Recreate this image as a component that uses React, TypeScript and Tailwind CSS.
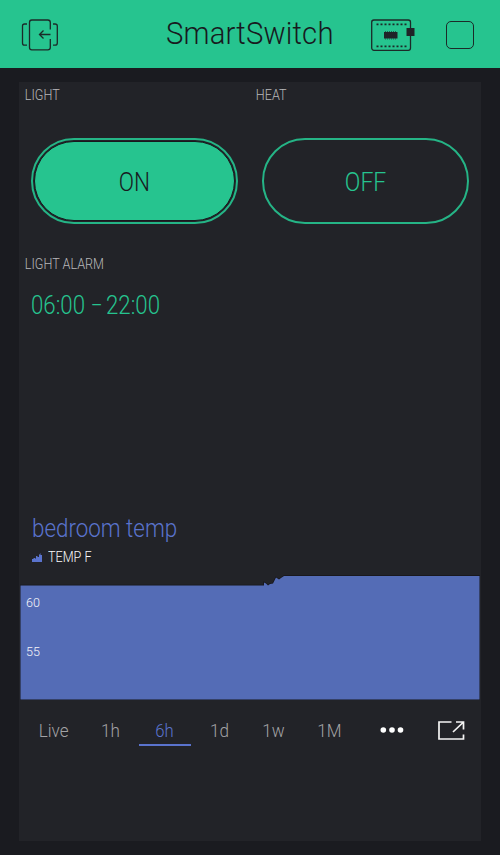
import React from 'react';

function DoorIcon() {
  return (
    <svg width="38" height="34" viewBox="0 0 38 34" fill="none" stroke="#1c2a28" strokeWidth="1.3">
      <path d="M6 7H3.500Q1.500 7 1.500 9V26Q1.500 28.200 3.500 28.200H6M32 7H34Q36.300 7 36.300 9V26Q36.300 28.200 34 28.200H32" />
      <path d="M29.300 12.500V5.500Q29.300 3 26.800 3H10.800Q8.500 3 8.500 5.500V30.500Q8.500 32.800 10.800 32.800H26.800Q29.300 32.800 29.300 30.500V22" />
      <path d="M29.500 17.500H18.500M22.500 13.500L18.500 17.500L22.500 21.500" />
    </svg>
  );
}

function BoardIcon() {
  return (
    <svg width="46" height="34" viewBox="0 0 46 34" fill="none" stroke="#1c2a28">
      <rect x="0.700" y="3" width="38.800" height="30.300" rx="2.200" strokeWidth="1.300" />
      <path d="M5.500 7.300H35.500M5.500 29.300H35.500" strokeWidth="1.800" strokeDasharray="2 2" />
      <rect x="13" y="15" width="13.500" height="6.500" fill="#202428" stroke="none" />
      <path d="M14 14.500H26M14 22H26" strokeWidth="1" strokeDasharray="1 1" strokeOpacity=".6" />
      <rect x="35.500" y="11" width="8" height="8" fill="#202428" stroke="none" />
    </svg>
  );
}

function TempChart() {
  return (
    <svg className="block" width="460" height="126" viewBox="0 0 460 126">
      <path d="M0.500 11.500H244V8.500L246 9.500L248 11.500L250 10L253 9.500L254 7.500L256 3.500L259 5.500L261 4L264 2H459.500V125.500H0.500Z" fill="#546cb6" stroke="#17161a" strokeWidth="1.500" paintOrder="stroke" />
    </svg>
  );
}

function Label({ children }: { children: React.ReactNode }) {
  return (
    <div className="origin-left scale-x-[0.9] whitespace-nowrap pl-[6.500px] text-[14px] leading-4 text-[#b8b8ba]">
      {children}
    </div>
  );
}

const ranges = [
  { name: 'Live', cell: 'w-[70px]' },
  { name: '1h', cell: 'w-[43px]' },
  { name: '6h', cell: 'w-[66px]' },
  { name: '1d', cell: 'w-[45px]' },
  { name: '1w', cell: 'w-[62px]' },
  { name: '1M', cell: 'w-[49px]' },
];

export default function App() {
  return (
    <div className="flex h-[855px] w-[500px] flex-col overflow-hidden bg-[#1a1b20] font-['Roboto',sans-serif] font-light">
      <header className="flex h-[68px] shrink-0 items-center bg-[#26c48f] pl-[21px] pr-[26px]">
        <DoorIcon />
        <h1 className="mb-[3px] ml-[107px] w-[205px] origin-left scale-x-[0.915] whitespace-nowrap text-[32px] leading-[66px] tracking-[0.200px] text-[#18191e]">
          SmartSwitch
        </h1>
        <BoardIcon />
        <div className="ml-auto mt-0.5 h-7 w-7 rounded-[5px] border-[1.500px] border-[#1c2a28]" />
      </header>
      <main className="mx-[19px] mt-[14px] flex h-[759px] flex-col bg-[#222328]">
        <div className="grid h-[169px] grid-cols-2 pt-[5px]">
          <section>
            <Label>LIGHT</Label>
            <button className="ml-3 mt-[35px] block h-[86px] w-[207px] rounded-full border-2 border-[#25b486] p-px">
              <span className="flex h-full items-center justify-center rounded-full border-[1.500px] border-[#18191e] bg-[#26c48f] pt-[3px] text-[25px] text-[#18191e]">
                <span className="scale-x-[0.9]">ON</span>
              </span>
            </button>
          </section>
          <section>
            <Label>HEAT</Label>
            <button className="ml-3 mt-[35px] flex h-[86px] w-[207px] items-center justify-center rounded-full border-2 border-[#25b486] pt-[3px] text-[25px] text-[#26c48f]">
              <span className="scale-x-[0.92]">OFF</span>
            </button>
          </section>
        </div>
        <section className="h-[262px] pt-[5px]">
          <Label>LIGHT ALARM</Label>
          <div className="ml-3 mt-[18px] flex whitespace-nowrap text-[25px] leading-8 text-[#26c48f]">
            <span className="w-[60px] origin-left scale-x-[0.89]">06:00</span>
            <span className="w-[15px] origin-left scale-x-[0.7]">–</span>
            <span className="w-[60px] origin-left scale-x-[0.89]">22:00</span>
          </div>
        </section>
        <section>
          <h2 className="ml-[13px] h-8 origin-left scale-x-[0.895] whitespace-nowrap text-[25px] leading-8 text-[#5a73cd]">bedroom temp</h2>
          <div className="ml-[13px] mt-1 flex h-4 items-center text-[14px] leading-4 text-[#fafafa]">
            <svg width="10" height="9" viewBox="0 0 10 9" fill="#5a73cd">
              <path d="M0 9V6H1.500V5H3V5.500H4V3H5.500V4H7V2L8.500 0V2H10V9Z" />
            </svg>
            <span className="ml-1.5 origin-left scale-x-[0.9] whitespace-nowrap">TEMP F</span>
          </div>
          <div className="ml-px mt-[9px] grid h-[126px]">
            <div className="col-start-1 row-start-1"><TempChart /></div>
            <div className="z-10 col-start-1 row-start-1 flex flex-col gap-[33px] pl-1.5 pt-5 text-[13.500px] leading-4 text-[#f4f4f8]">
              <span className="origin-left scale-x-[0.93]">60</span>
              <span className="origin-left scale-x-[0.93]">55</span>
            </div>
          </div>
        </section>
        <nav className="mt-[13px] flex h-[34px] text-[19px] leading-9 text-[#a2a2a5]">
          {ranges.map((r) => (
            <div key={r.name} className={`flex justify-center ${r.cell}`}>
              {r.name === '6h' ? (
                <span className="h-[33px] w-[52px] shrink-0 border-b-2 border-[#5a73cd] text-center text-[#5a73cd]">
                  <span className="mr-0.5 inline-block scale-x-[0.88]">{r.name}</span>
                </span>
              ) : (
                <span className="mr-px scale-x-[0.9]">{r.name}</span>
              )}
            </div>
          ))}
          <svg className="ml-[26px] mt-[14px]" width="24" height="6" viewBox="0 0 24 6" fill="#fff">
            <circle cx="3.300" cy="3" r="2.800" /><circle cx="12" cy="3" r="2.800" /><circle cx="20.500" cy="3" r="2.800" />
          </svg>
          <svg className="ml-[33px] mt-[7px]" width="30" height="22" viewBox="0 0 30 22" fill="none" stroke="#f5f5f5" strokeWidth="1.700">
            <path d="M14.500 2H2V19H26.500V14.500" />
            <path d="M16 12L26 2.500M19 2H26.500V9.500" />
          </svg>
        </nav>
      </main>
    </div>
  );
}
